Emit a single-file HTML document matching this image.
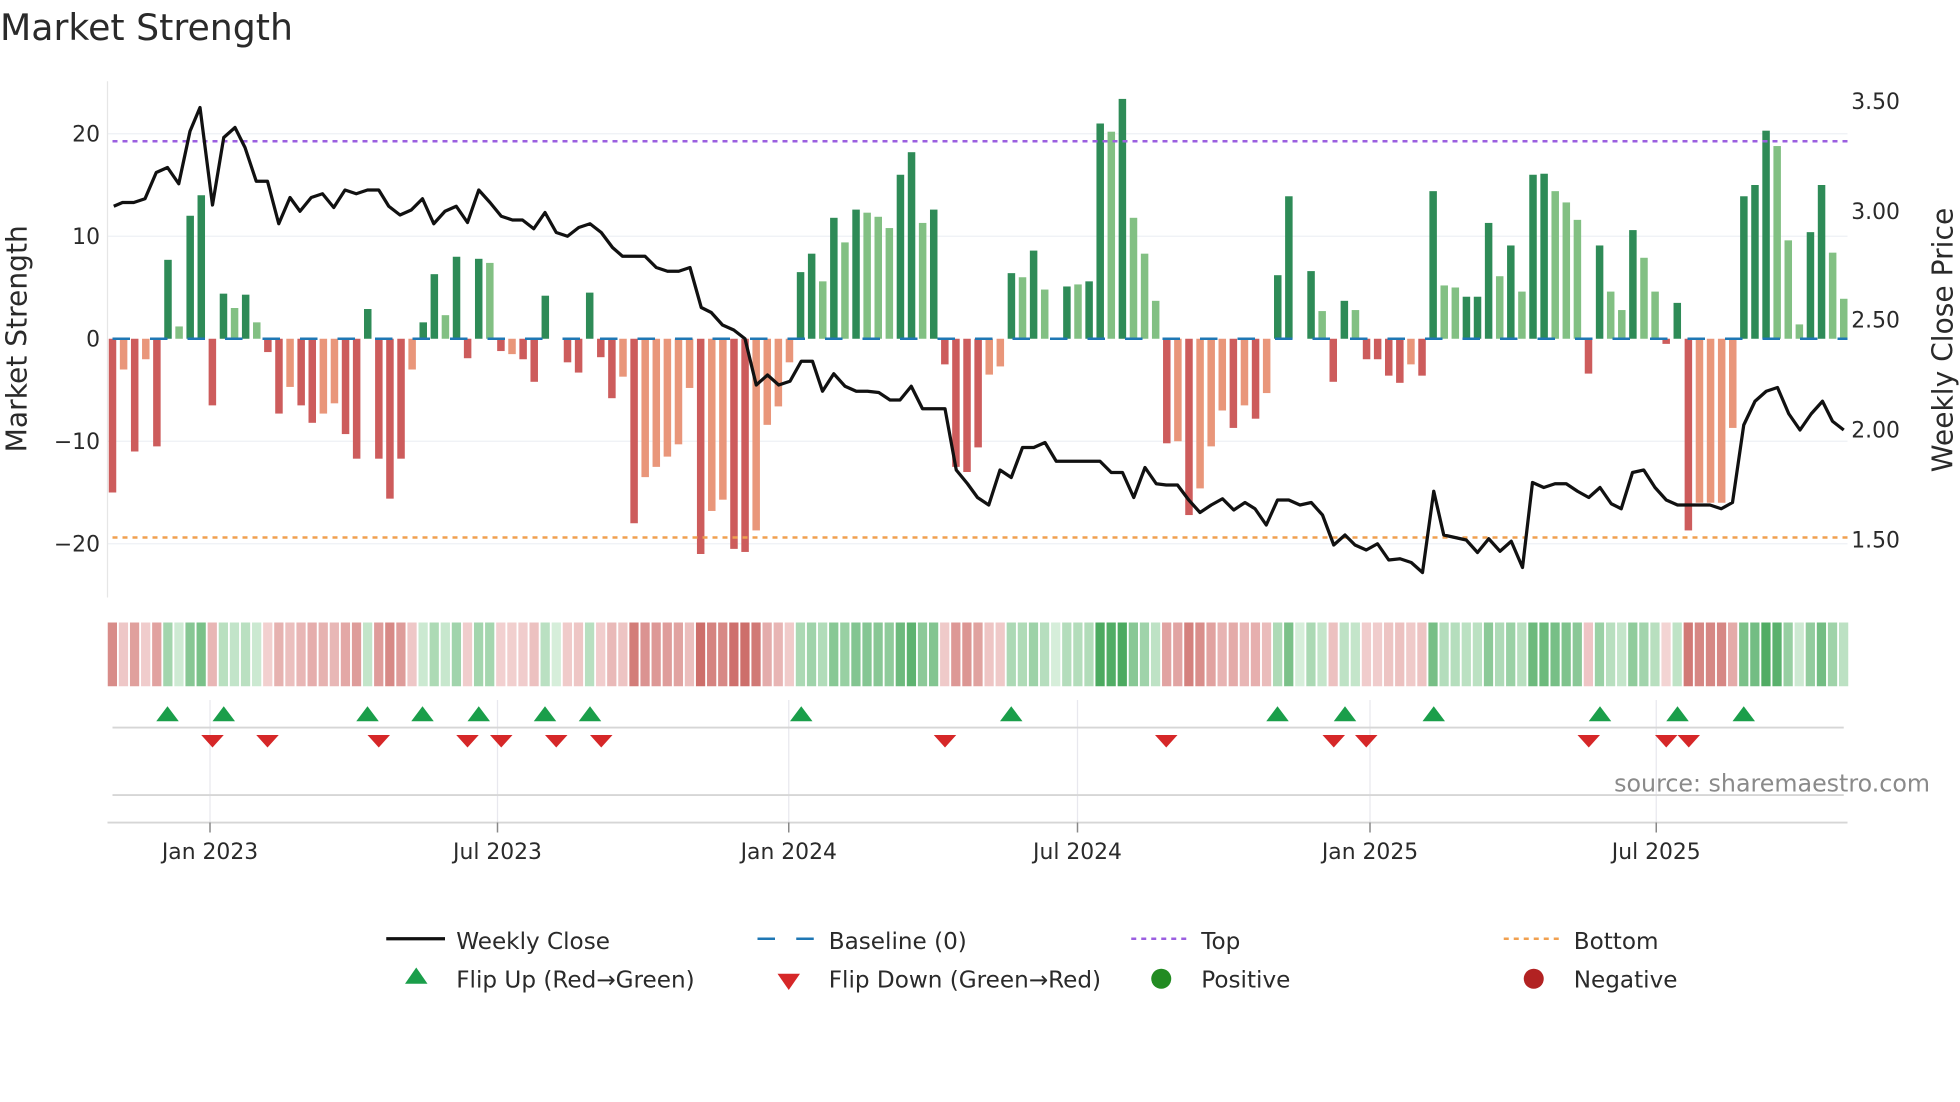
<!DOCTYPE html>
<html><head><meta charset="utf-8"><style>
html,body{margin:0;padding:0;background:#fff;width:1960px;height:1102px;overflow:hidden}
svg{display:block}
text{font-family:"DejaVu Sans","Liberation Sans",sans-serif;fill:#2a2a2a}
</style></head><body>
<svg id="s" width="1960" height="1102" viewBox="0 0 1568 881.6" xmlns="http://www.w3.org/2000/svg">
<text x="0" y="32" font-size="29">Market Strength</text>
<g stroke="#eef0f4" stroke-width="1">
<line x1="86" x2="1478" y1="107" y2="107"/><line x1="86" x2="1478" y1="189" y2="189"/>
<line x1="86" x2="1478" y1="353" y2="353"/><line x1="86" x2="1478" y1="435" y2="435"/>
</g>
<line x1="86" x2="86" y1="65" y2="478" stroke="#e6e6e6"/>
<g font-size="17.5" text-anchor="end">
<text x="80" y="113">20</text><text x="80" y="195">10</text><text x="80" y="277">0</text>
<text x="80" y="359">−10</text><text x="80" y="441">−20</text>
</g>
<g font-size="17.5">
<text x="1481" y="87">3.50</text><text x="1481" y="175">3.00</text><text x="1481" y="262">2.50</text>
<text x="1481" y="350">2.00</text><text x="1481" y="438">1.50</text>
</g>
<text transform="translate(21,271) rotate(-90)" font-size="22.5" text-anchor="middle">Market Strength</text>
<text transform="translate(1562,272) rotate(-90)" font-size="22.5" text-anchor="middle">Weekly Close Price</text>
<g id="bars"></g>
<line x1="90" x2="1478" y1="271" y2="271" stroke="#1f77b4" stroke-width="2" stroke-dasharray="14,16"/>
<line x1="90" x2="1478" y1="113" y2="113" stroke="#9b5fe0" stroke-width="2" stroke-dasharray="4,4"/>
<line x1="90" x2="1478" y1="430" y2="430" stroke="#f0a050" stroke-width="2" stroke-dasharray="4,4"/>
<polyline id="price" fill="none" stroke="#111" stroke-width="2.6" stroke-linejoin="round"/>
<g id="heat"></g>
<g stroke="#e8e8ee" stroke-width="1">
<line x1="168" x2="168" y1="560" y2="658"/><line x1="398" x2="398" y1="560" y2="658"/>
<line x1="631" x2="631" y1="560" y2="658"/><line x1="862" x2="862" y1="560" y2="658"/>
<line x1="1096" x2="1096" y1="560" y2="658"/><line x1="1325" x2="1325" y1="560" y2="658"/>
</g>
<line x1="90" x2="1475" y1="582" y2="582" stroke="#d6d6d6" stroke-width="1.5"/>
<line x1="90" x2="1475" y1="636" y2="636" stroke="#d6d6d6" stroke-width="1.5"/>
<line x1="86" x2="1478" y1="658" y2="658" stroke="#d6d6d6" stroke-width="1.5"/>
<g id="marks"></g>
<text x="1544" y="633" font-size="19" text-anchor="end" style="fill:#8a8a8a">source: sharemaestro.com</text>
<g stroke="#888" stroke-width="1.2">
<line x1="168" x2="168" y1="658" y2="666"/><line x1="398" x2="398" y1="658" y2="666"/>
<line x1="631" x2="631" y1="658" y2="666"/><line x1="862" x2="862" y1="658" y2="666"/>
<line x1="1096" x2="1096" y1="658" y2="666"/><line x1="1325" x2="1325" y1="658" y2="666"/>
</g>
<g font-size="17.5" text-anchor="middle">
<text x="168" y="687">Jan 2023</text><text x="398" y="687">Jul 2023</text><text x="631" y="687">Jan 2024</text>
<text x="862" y="687">Jul 2024</text><text x="1096" y="687">Jan 2025</text><text x="1325" y="687">Jul 2025</text>
</g>
<g font-size="18.5">
<line x1="309" x2="356" y1="751" y2="751" stroke="#111" stroke-width="2.6"/>
<text x="365" y="759">Weekly Close</text>
<line x1="606" x2="620" y1="751" y2="751" stroke="#1f77b4" stroke-width="2"/>
<line x1="637" x2="651" y1="751" y2="751" stroke="#1f77b4" stroke-width="2"/>
<text x="663" y="759">Baseline (0)</text>
<line x1="905" x2="950" y1="751" y2="751" stroke="#9b5fe0" stroke-width="2" stroke-dasharray="4,4"/>
<text x="961" y="759">Top</text>
<line x1="1203" x2="1248" y1="751" y2="751" stroke="#f0a050" stroke-width="2" stroke-dasharray="4,4"/>
<text x="1259" y="759">Bottom</text>
<polygon points="333,774 324,787 342,787" fill="#1a9e4a"/>
<text x="365" y="790">Flip Up (Red→Green)</text>
<polygon points="622,779 640,779 631,792" fill="#d62728"/>
<text x="663" y="790">Flip Down (Green→Red)</text>
<circle cx="929" cy="783" r="8" fill="#228b22"/>
<text x="961" y="790">Positive</text>
<circle cx="1227" cy="783" r="8" fill="#b22222"/>
<text x="1259" y="790">Negative</text>
</g>
</svg>
<script>
var NS="http://www.w3.org/2000/svg";
var d="-15R -3r -11R -2r -10.5R 7.7G 1.2g 12G 14G -6.5R 4.4G 3g 4.3G 1.6g -1.3R -7.3R -4.7r -6.5R -8.2R -7.3r -6.3r -9.3R -11.7R 2.9G -11.7R -15.6R -11.7R -3r 1.6G 6.3G 2.3g 8G -1.9R 7.8G 7.4g -1.2R -1.5r -2R -4.2R 4.2G 0g -2.3R -3.3R 4.5G -1.8R -5.8R -3.7r -18R -13.5r -12.5r -11.5r -10.3r -4.8r -21R -16.8r -15.7r -20.5R -20.8R -18.7r -8.4r -6.6r -2.3r 6.5G 8.3G 5.6g 11.8G 9.4g 12.6G 12.3g 11.9g 10.8g 16G 18.2G 11.3g 12.6G -2.5R -12.5R -13R -10.6R -3.5r -2.7r 6.4G 6g 8.6G 4.8g 0g 5.1G 5.3g 5.6G 21G 20.2g 23.4G 11.8g 8.3g 3.7g -10.2R -10r -17.2R -14.6r -10.5r -7r -8.7R -6.5r -7.8R -5.3r 6.2G 13.9G 0g 6.6G 2.7g -4.2R 3.7G 2.8g -2R -2R -3.6R -4.3R -2.5r -3.6R 14.4G 5.2g 5g 4.1G 4.1G 11.3G 6.1g 9.1G 4.6g 16G 16.1G 14.4g 13.3g 11.6g -3.4R 9.1G 4.6g 2.8g 10.6G 7.9g 4.6g -0.5R 3.5G -18.7R -16r -16r -16r -8.7r 13.9G 15G 20.3G 18.8g 9.6g 1.4g 10.4G 15G 8.4g 3.9g".split(" ");
var col={G:"#2e8b57",g:"#82c083",R:"#cd5c5c",r:"#e9967a"};
var bars=document.getElementById("bars"),heat=document.getElementById("heat");
var step=(1475-90)/(d.length-1);
function rect(p,x,y,w,h,f){var r=document.createElementNS(NS,"rect");r.setAttribute("x",x);r.setAttribute("y",y);r.setAttribute("width",w);r.setAttribute("height",h);r.setAttribute("fill",f);p.appendChild(r);}
function mix(a,b,t){var s="#";for(var i=0;i<3;i++){var v=Math.round(a[i]+(b[i]-a[i])*t);s+=("0"+v.toString(16)).slice(-2);}return s;}
d.forEach(function(s,i){var v=parseFloat(s),c=s.slice(-1),x=90+i*step;
 var y0=271,h=Math.abs(v)*8.2;
 if(h>0)rect(bars,x-3,v>0?y0-h:y0,6,h,col[c]);
 var t=Math.min(Math.abs(v)/21,1),f;
 if(v>=0) f=mix([214,238,218],[76,170,96],t); else f=mix([244,214,214],[205,110,106],t);
 rect(heat,x-3.8,498,7.4,51,f);
});
var pts="91,165 98,162 107,162 116,159 125,138 134,134 143,147 152,105 160,86 170,164 179,110 188,102 196,118 205,145 214,145 223,179 232,158 240,169 249,158 258,155 267,166 276,152 285,155 294,152 303,152 311,165 320,172 329,168 338,159 347,179 356,169 365,165 374,178 383,152 392,162 401,173 410,176 418,176 427,183 436,170 445,186 454,189 463,182 472,179 481,186 490,198 498,205 507,205 516,205 525,214 534,217 543,217 552,214 561,246 569,250 578,260 587,264 596,271 605,308 614,300 623,308 632,305 641,289 650,289 658,313 667,299 676,309 685,313 694,313 703,314 712,320 720,320 729,309 738,327 747,327 756,327 765,376 774,387 782,398 791,404 800,376 809,382 818,358 827,358 836,354 845,369 853,369 862,369 871,369 880,369 889,378 898,378 907,398 916,374 925,387 933,388 942,388 951,400 960,410 969,404 978,399 987,408 996,402 1004,407 1013,420 1022,400 1031,400 1040,404 1049,402 1058,412 1067,436 1076,428 1084,436 1093,440 1102,435 1111,448 1120,447 1129,450 1138,458 1147,393 1155,428 1164,430 1173,432 1182,442 1191,431 1200,441 1209,433 1218,454 1226,386 1235,390 1244,387 1253,387 1262,393 1271,398 1280,390 1289,403 1297,407 1306,378 1315,376 1324,390 1333,400 1342,404 1351,404 1360,404 1368,404 1377,407 1386,402 1395,340 1404,321 1413,313 1422,310 1431,331 1440,344 1449,331 1458,321 1466,337 1475,344";
document.getElementById("price").setAttribute("points",pts);
var marks=document.getElementById("marks");
function poly(p,f){var e=document.createElementNS(NS,"polygon");e.setAttribute("points",p);e.setAttribute("fill",f);marks.appendChild(e);}
[134,179,294,338,383,436,472,641,809,1022,1076,1147,1280,1342,1395].forEach(function(x){poly((x)+",565 "+(x-9)+",577 "+(x+9)+",577","#1a9e4a");});
[170,214,303,374,401,445,481,756,933,1067,1093,1271,1333,1351].forEach(function(x){poly((x-9)+",588 "+(x+9)+",588 "+x+",598","#d62728");});
</script>
</body></html>
